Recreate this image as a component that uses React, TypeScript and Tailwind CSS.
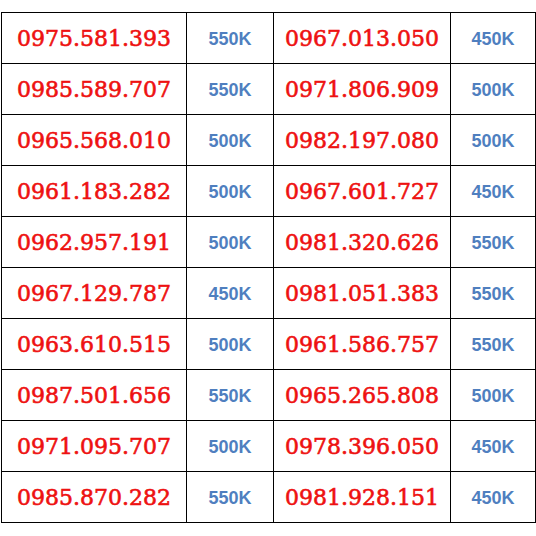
const ROWS: [string, string, string, string][] = [
  ["0975.581.393", "550K", "0967.013.050", "450K"],
  ["0985.589.707", "550K", "0971.806.909", "500K"],
  ["0965.568.010", "500K", "0982.197.080", "500K"],
  ["0961.183.282", "500K", "0967.601.727", "450K"],
  ["0962.957.191", "500K", "0981.320.626", "550K"],
  ["0967.129.787", "450K", "0981.051.383", "550K"],
  ["0963.610.515", "500K", "0961.586.757", "550K"],
  ["0987.501.656", "550K", "0965.265.808", "500K"],
  ["0971.095.707", "500K", "0978.396.050", "450K"],
  ["0985.870.282", "550K", "0981.928.151", "450K"],
]

function Phone({ value }: { value: string }) {
  return (
    <td className="border border-black text-center align-middle p-0 pt-[4px]">
      <span className="text-[22px] leading-none text-[#ee1111] font-['DejaVu_Serif',serif] [-webkit-text-stroke:0.6px_#ee1111]">
        {value}
      </span>
    </td>
  )
}

function Price({ value }: { value: string }) {
  return (
    <td className="border border-black text-center align-middle p-0 pt-px">
      <span className="text-[18px] leading-none font-bold text-[#4f7fbf] font-['Liberation_Sans',Arial,sans-serif]">
        {value}
      </span>
    </td>
  )
}

export default function App() {
  return (
    <div className="w-[536px] h-[536px] bg-white pt-3 pl-px">
      <table className="border-collapse table-fixed w-[534px]">
        <colgroup>
          <col className="w-[185px]" />
          <col className="w-[87px]" />
          <col className="w-[177px]" />
          <col className="w-[85px]" />
        </colgroup>
        <tbody>
          {ROWS.map((row, i) => (
            <tr key={i} className="h-[51px]">
              <Phone value={row[0]} />
              <Price value={row[1]} />
              <Phone value={row[2]} />
              <Price value={row[3]} />
            </tr>
          ))}
        </tbody>
      </table>
    </div>
  )
}
